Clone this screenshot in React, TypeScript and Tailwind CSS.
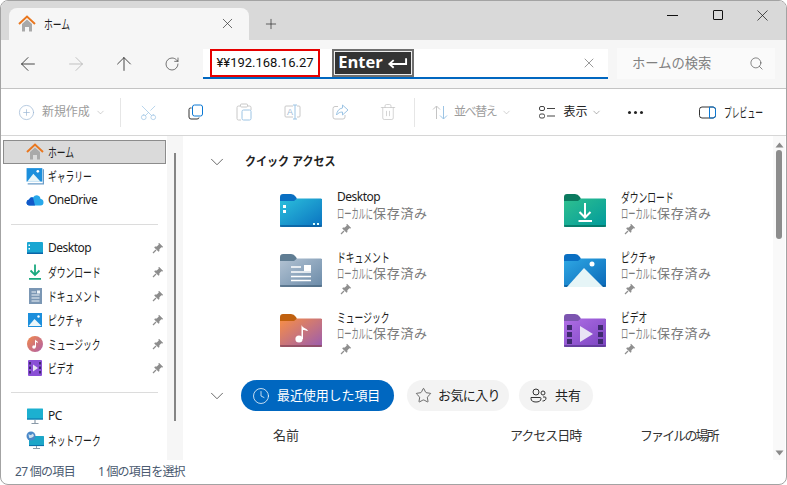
import React from "react";
import { ArrowLeft, ArrowRight, ArrowUp, RotateCw, X, Plus, Search, Scissors, Trash2, ChevronDown, Clock, Star, CirclePlus } from "lucide-react";

/* Narrow kana as in the reference font: real text, condensed horizontally. */
function K({ children, cw = 8.775, cls = "scale-x-[0.675] text-[13px]" }: { children: string; cw?: number; cls?: string }) {
  return (
    <span className={`block shrink-0 origin-left whitespace-nowrap leading-[16px] ${cls}`} style={{ width: children.length * cw }}>
      {children}
    </span>
  );
}

const Pin = ({ c = "#8d8d8d", s = 12 }: { c?: string; s?: number }) => (
  <svg width={s} height={s} viewBox="0 0 12 12" className="shrink-0">
    <path d="M7 0.8 L11.2 5 L10.3 5.6 L9.4 5.2 L7.4 7.2 L7.4 9 L6.6 9.8 L2.2 5.4 L3 4.6 L4.8 4.6 L6.8 2.6 L6.4 1.6 Z" fill={c} />
    <path d="M4 8 L1 11" stroke={c} strokeWidth="1.2" />
  </svg>
);

const HomeIcon = ({ s = 18 }: { s?: number }) => (
  <svg width={s} height={s} viewBox="0 0 18 18">
    <path d="M4 9 L9 4.5 L14 9 V16.5 H11 V12 H7 V16.5 H4 Z" fill="#a9a9a9" />
    <path d="M1 9 L9 1.6 L17 9" fill="none" stroke="#e9771f" strokeWidth="2" />
  </svg>
);

function Folder({ id, tab, from, to, edge, children }: { id: string; tab: string; from: string; to: string; edge: string; children?: React.ReactNode }) {
  return (
    <svg width="42" height="34" viewBox="0 0 42 34">
      <defs>
        <linearGradient id={id} x1="0" y1="0" x2="1" y2="1">
          <stop offset="0" stopColor={from} />
          <stop offset="1" stopColor={to} />
        </linearGradient>
      </defs>
      <path d="M0 3 Q0 0 3 0 H11 Q14 0 16 3 L17 5 H42 V10 H0 Z" fill={tab} />
      <path d="M0 7 H14 L17 4.5 H41 Q42 4.5 42 6 V31 Q42 33 40 33 H2 Q0 33 0 31 Z" fill={`url(#${id})`} />
      <path d="M0 32 H42" stroke={edge} strokeWidth="1.4" />
      {children}
    </svg>
  );
}

const DesktopFolder = () => (
  <Folder id="fd" tab="#0a6fc2" from="#2cc0dc" to="#0a72c0" edge="#0a5c9c">
    <rect x="3" y="11" width="3" height="3" fill="#fff" />
    <rect x="3" y="16" width="3" height="3" fill="#fff" />
    <rect x="33" y="29" width="2" height="2" fill="#dff" />
    <rect x="37" y="29" width="2" height="2" fill="#dff" />
  </Folder>
);
const DownloadFolder = () => (
  <Folder id="fdl" tab="#0b7a5f" from="#2fc08f" to="#019a9c" edge="#06705f">
    <path d="M21 9 V23 M15.5 18 L21 23.5 L26.5 18" fill="none" stroke="#fff" strokeWidth="2" />
    <path d="M14.5 27 H28" stroke="#fff" strokeWidth="2" />
  </Folder>
);
const DocFolder = () => (
  <Folder id="fdc" tab="#607d93" from="#b3c3d3" to="#6a8aa8" edge="#4e6a82">
    <path d="M11 13 H21 M11 18 H31 M11 22.5 H31 M11 26.5 H31" stroke="#fff" strokeWidth="1.6" />
    <rect x="24" y="11" width="7" height="6" fill="#fff" />
  </Folder>
);
const PicFolder = () => (
  <Folder id="fp" tab="#0a6fc2" from="#2fa8e4" to="#0a68b8" edge="#0a5c9c">
    <circle cx="28" cy="10" r="2.5" fill="#fff" />
    <path d="M3 33 L20 14 L39 33 Z" fill="#e6f5f7" />
  </Folder>
);
const MusicFolder = () => (
  <Folder id="fm" tab="#c0610f" from="#f98f45" to="#9a5cb0" edge="#8a4a5a">
    <circle cx="19" cy="25" r="3.6" fill="#fff" />
    <path d="M21.5 25 V11 C23 14.5 27 14 28 17 C26 16.5 24 16 23 16 V25 Z" fill="#fff" />
  </Folder>
);
const VideoFolder = () => (
  <Folder id="fv" tab="#7c55b0" from="#b06ee6" to="#7a44c0" edge="#5a3a90">
    <g fill="#3f2a70">
      <rect x="3" y="11" width="5" height="5" /><rect x="3" y="18" width="5" height="5" /><rect x="3" y="25" width="5" height="5" />
      <rect x="34" y="11" width="5" height="5" /><rect x="34" y="18" width="5" height="5" /><rect x="34" y="25" width="5" height="5" />
    </g>
    <path d="M16 12 L29 20 L16 28 Z" fill="#e9e3f5" />
  </Folder>
);

const SideIcons: Record<string, React.ReactNode> = {
  home: <HomeIcon />,
  gallery: (
    <svg width="18" height="18" viewBox="0 0 16 16">
      <rect x="0.5" y="1" width="14" height="12" fill="#1c8fdc" />
      <path d="M1 13 L6.5 6 L13 13 Z" fill="#e8f5f8" />
      <circle cx="10.5" cy="3.8" r="1.2" fill="#fff" />
      <path d="M1.5 15 H15.5 V2" fill="none" stroke="#6a9cc8" strokeWidth="1.2" />
    </svg>
  ),
  onedrive: (
    <svg width="18" height="14" viewBox="0 0 18 12">
      <path d="M3.5 11.5 Q0.5 11.5 0.5 8.5 Q0.5 6 3 5.6 Q4.5 2.5 7 3.5 Q9 0.5 12 1.5 Q14.4 2.3 14.6 5 Q17.5 5.3 17.5 8.2 Q17.5 11.5 14.5 11.5 Z" fill="#28a8ea" />
      <path d="M3.5 11.5 Q0.5 11.5 0.5 8.5 Q0.5 6 3 5.6 Q4.5 2.5 7 3.5 L9 11.5 Z" fill="#1258c8" />
    </svg>
  ),
  desktop: (
    <svg width="16" height="12" viewBox="0 0 16 12">
      <rect width="16" height="12" rx="1" fill="#19a6d2" />
      <rect y="10.5" width="16" height="1.5" fill="#0a64a8" />
      <rect x="1.5" y="2.5" width="1.5" height="1.5" fill="#fff" />
      <rect x="1.5" y="6" width="1.5" height="1.5" fill="#fff" />
    </svg>
  ),
  download: (
    <svg width="14" height="16" viewBox="0 0 14 16">
      <path d="M7 0.5 V10.5 M2.5 6.5 L7 11 L11.5 6.5" fill="none" stroke="#1aa97f" strokeWidth="1.8" />
      <path d="M1 14.8 H13" stroke="#1aa97f" strokeWidth="1.8" />
    </svg>
  ),
  doc: (
    <svg width="13" height="16" viewBox="0 0 13 16">
      <rect width="13" height="16" fill="#7b97b4" />
      <path d="M2.5 4 H7 M2.5 7 H10.5 M2.5 10 H10.5 M2.5 13 H10.5" stroke="#eef3f8" strokeWidth="1" />
      <rect x="8" y="2.5" width="3" height="3" fill="#eef3f8" />
    </svg>
  ),
  pic: (
    <svg width="14" height="14" viewBox="0 0 14 14">
      <rect width="14" height="14" fill="#1c8fdc" />
      <path d="M0.5 13 L6.5 6 L13.5 13 Z" fill="#eaf6f9" />
      <circle cx="10.5" cy="3.5" r="1.2" fill="#fff" />
    </svg>
  ),
  music: (
    <svg width="16" height="16" viewBox="0 0 16 16">
      <defs><linearGradient id="sm" x1="0" y1="0" x2="1" y2="1"><stop offset="0" stopColor="#f28a4a" /><stop offset="1" stopColor="#b05fa8" /></linearGradient></defs>
      <circle cx="8" cy="8" r="8" fill="url(#sm)" />
      <circle cx="7" cy="11" r="1.8" fill="#fff" />
      <path d="M8 11 V3.5 C9 5 11 5 11 7 L9 6 V11 Z" fill="#fff" />
    </svg>
  ),
  video: (
    <svg width="14" height="16" viewBox="0 0 14 16">
      <rect width="14" height="16" rx="1" fill="#8a4fd6" />
      <g fill="#3f2a70">
        <rect x="1" y="2" width="2" height="2.5" /><rect x="1" y="6.5" width="2" height="2.5" /><rect x="1" y="11" width="2" height="2.5" />
        <rect x="11" y="2" width="2" height="2.5" /><rect x="11" y="6.5" width="2" height="2.5" /><rect x="11" y="11" width="2" height="2.5" />
      </g>
      <path d="M5 4.5 L10 8 L5 11.5 Z" fill="#e9e3f5" />
    </svg>
  ),
  pc: (
    <svg width="16" height="16" viewBox="0 0 16 16">
      <rect y="0.5" width="16" height="11" rx="0.5" fill="#1cb0d0" />
      <path d="M0 11 H16" stroke="#0a6ca8" strokeWidth="1.2" />
      <path d="M8 12 V15 M4.5 15.5 H11.5" stroke="#8a9aa8" strokeWidth="1.2" />
    </svg>
  ),
  net: (
    <svg width="18" height="18" viewBox="0 0 18 18">
      <rect x="3" y="5" width="15" height="10" rx="0.5" fill="#1ca6c8" />
      <path d="M3 14.6 H18" stroke="#0a6ca8" strokeWidth="1" />
      <path d="M10.5 15 V17 M7 17.5 H14" stroke="#8a9aa8" strokeWidth="1" />
      <circle cx="5" cy="5" r="4.5" fill="#4a88c8" />
      <path d="M2.5 3 Q5 5 7 2.5 L8 5 Q5 8 3 6.5 Z" fill="#cfe0ec" />
    </svg>
  ),
};

function SideItem({ icon, label, pin, sel, latin }: { icon: string; label: string; pin?: boolean; sel?: boolean; latin?: boolean }) {
  return (
    <div className={`flex items-center h-[24px] ml-[2px] w-[163px] ${sel ? "bg-[#dadada] border border-[#8c8c8c]" : ""}`}>
      <span className={`flex justify-center items-center w-[20px] h-[20px] ${sel ? "ml-[21px]" : "ml-[22px]"} shrink-0`}>{SideIcons[icon]}</span>
      <span className="ml-[3px] flex text-[12px] leading-[16px] text-[#1c1c1c] flex-1 whitespace-nowrap">
        {latin ? <span className="tracking-[-0.5px]">{label}</span> : <K>{label}</K>}
      </span>
      {pin && <span className="mr-[2px] flex"><Pin /></span>}
    </div>
  );
}

function Quick({ icon, name, latin }: { icon: React.ReactNode; name: string; latin?: boolean }) {
  return (
    <div className="flex h-[60px]">
      <div className="w-[42px] mt-[5px] shrink-0">{icon}</div>
      <div className="ml-[15px] flex flex-col">
        <span className="flex h-[16px] leading-[16px] text-[12px] text-[#1c1c1c] whitespace-nowrap">
          {latin ? <span className="tracking-[-0.5px]">{name}</span> : <K>{name}</K>}
        </span>
        <span className="flex h-[16px] leading-[16px] text-[#7a7a7a] whitespace-nowrap">
          <K cw={7.2} cls="scale-x-[0.554] text-[13px]">ローカルに</K>
          <span className="text-[13px] tracking-[0.7px]">保存済み</span>
        </span>
        <span className="mt-[2px] ml-[3px] flex"><Pin c="#8f8f8f" /></span>
      </div>
    </div>
  );
}

const Btn = ({ children }: { children: React.ReactNode }) => (
  <div className="w-[48px] flex justify-center items-center shrink-0">{children}</div>
);

export default function App() {
  return (
    <div className="w-[787px] h-[485px] bg-white border border-[#a3a3a3] rounded-[8px] overflow-hidden flex flex-col font-['Noto_Sans','Noto_Sans_CJK_JP',sans-serif] text-[#1c1c1c]">
      {/* title bar */}
      <div className="h-[39px] bg-[#d9d9d9] flex items-end shrink-0">
        <div className="ml-[8px] w-[240px] h-[32px] bg-[#f6f6f6] rounded-t-[8px] flex items-center">
          <span className="ml-[9px] flex"><HomeIcon /></span>
          <span className="ml-[8px] text-[12px] flex-1 flex"><K>ホーム</K></span>
          <X size={17} strokeWidth={1} className="mr-[13px] -mt-[2px] text-[#333]" />
        </div>
        <div className="ml-[14px] h-[32px] flex items-center">
          <Plus size={16} strokeWidth={1} className="text-[#222]" />
        </div>
        <div className="flex-1" />
        <div className="flex self-start mt-[5px] mr-[1px] h-[18px] items-center">
          <div className="w-[45px] flex justify-center"><div className="w-[11px] h-px bg-[#111]" /></div>
          <div className="w-[45px] flex justify-center"><div className="w-[10px] h-[10px] border border-[#111] rounded-[1px]" /></div>
          <div className="w-[45px] flex justify-center"><X size={19} strokeWidth={0.9} className="text-[#111]" /></div>
        </div>
      </div>
      {/* address row */}
      <div className="h-[48px] bg-[#f6f6f6] flex items-center border-b-[1px] border-[#c4c4c4] shrink-0 box-content">
        <div className="w-[202px] flex shrink-0 pl-[3px]">
          <Btn><ArrowLeft size={22} strokeWidth={0.9} className="text-[#222]" /></Btn>
          <Btn><ArrowRight size={22} strokeWidth={0.9} className="text-[#b5b5b5]" /></Btn>
          <Btn><ArrowUp size={22} strokeWidth={0.9} className="text-[#222]" /></Btn>
          <Btn><RotateCw size={16} strokeWidth={1} className="text-[#333]" /></Btn>
        </div>
        <div className="w-[405px] h-[30px] bg-white border-b-2 border-[#0067c0] flex items-center pl-[7px] shrink-0">
          <div className="w-[110px] h-[28px] border-2 border-[#e60000] flex items-center justify-center text-[13px] text-[#111] font-['Roboto','Noto_Sans_CJK_JP',sans-serif] whitespace-nowrap -mt-[1px] bg-white">¥¥192.168.16.27</div>
          <div className="ml-[12px] w-[82px] h-[28px] bg-[#333] border-[2px] border-[#6f6f6f] -mt-[1px] flex items-center justify-center shrink-0 outline outline-1 -outline-offset-[3px] outline-[#eee]">
            <span className="text-white font-bold text-[16.5px] font-['Open_Sans',sans-serif]">Enter</span>
            <svg width="21" height="12" viewBox="0 0 22 12" className="ml-[4px]">
              <path d="M20 1 V7 H3 M7 3 L2.5 7 L7 11" fill="none" stroke="#fff" strokeWidth="2" />
            </svg>
          </div>
          <div className="flex-1" />
          <X size={16} strokeWidth={0.9} className="text-[#555] mr-[11px]" />
        </div>
        <div className="ml-[9px] w-[158px] h-[31px] bg-[#fafafa] flex items-center shrink-0 -mt-[1px]">
          <span className="ml-[15px] text-[13.3px] text-[#808080] flex-1">ホームの検索</span>
          <Search size={15} strokeWidth={1} className="mr-[11px] text-[#444]" />
        </div>
      </div>
      {/* toolbar */}
      <div className="h-[47px] border-b border-[#d6d6d6] flex items-center shrink-0 bg-white">
        <div className="w-[119px] pl-[17px] flex items-center shrink-0">
          <CirclePlus size={17} strokeWidth={1} className="text-[#9cb7d4]" />
          <span className="ml-[7px] text-[12px] text-[#9c9c9c] tracking-[-0.1px]">新規作成</span>
          <ChevronDown size={11} strokeWidth={1} className="ml-[5px] text-[#9c9c9c]" />
        </div>
        <div className="w-px h-[29px] bg-[#e6e6e6] shrink-0" />
        <div className="ml-[3px] flex">
          <Btn><Scissors size={19} strokeWidth={0.9} className="text-[#9cc4e4] -rotate-90" /></Btn>
          <Btn>
            <svg width="16" height="16" viewBox="0 0 16 16">
              <path d="M3.5 4 H2.5 Q1 4 1 5.5 V13 Q1 15 3 15 H9 Q11 15 11 13.5" fill="none" stroke="#333" strokeWidth="1" />
              <rect x="4.5" y="1" width="10" height="11" rx="2" fill="none" stroke="#0a78d4" strokeWidth="1" />
            </svg>
          </Btn>
          <Btn>
            <svg width="16" height="18" viewBox="0 0 16 18">
              <path d="M4 3 H2.5 Q1 3 1 4.5 V15.5 Q1 17 2.5 17 H5" fill="none" stroke="#c8c8c8" strokeWidth="1" />
              <path d="M12 3 H13.5 Q15 3 15 4.5 V7" fill="none" stroke="#c8c8c8" strokeWidth="1" />
              <rect x="4.5" y="1" width="7" height="3" rx="1" fill="none" stroke="#c8c8c8" strokeWidth="1" />
              <rect x="6" y="7" width="9" height="10" rx="1.5" fill="none" stroke="#9cc4e4" strokeWidth="1" />
            </svg>
          </Btn>
          <Btn>
            <svg width="17" height="16" viewBox="0 0 17 16">
              <path d="M9 2 H2 Q1 2 1 3 V12 Q1 13 2 13 H9 M13 2 H15 Q16 2 16 3 V12 Q16 13 15 13 H13" fill="none" stroke="#c8c8c8" strokeWidth="1" />
              <path d="M11 1 V15 M9 1 H13 M9 15 H13" stroke="#9cc4e4" strokeWidth="1" fill="none" />
              <text x="3" y="11" fontSize="9" fill="#9cb7d4" fontFamily="Liberation Sans">A</text>
            </svg>
          </Btn>
          <Btn>
            <svg width="17" height="16" viewBox="0 0 17 16">
              <path d="M6 2.5 H3 Q1 2.5 1 4.5 V13 Q1 15 3 15 H11 Q13 15 13 13 V11" fill="none" stroke="#c8c8c8" strokeWidth="1" />
              <path d="M10.5 1 L16 6 L10.5 11 V8 C8 8 6 9 4.5 11 C5 7 7 4.5 10.5 4 Z" fill="none" stroke="#9cc4e4" strokeWidth="1" />
            </svg>
          </Btn>
          <Btn><Trash2 size={18} strokeWidth={0.9} className="text-[#c0c0c0]" /></Btn>
        </div>
        <div className="ml-[2px] w-px h-[29px] bg-[#e6e6e6] shrink-0" />
        <div className="ml-[17px] flex items-center shrink-0">
          <svg width="16" height="15" viewBox="0 0 16 15">
            <path d="M4.5 14 V1 M1 4.5 L4.5 1 L8 4.5" fill="none" stroke="#c4c4c4" strokeWidth="1" />
            <path d="M11.5 1 V14 M8 10.5 L11.5 14 L15 10.5" fill="none" stroke="#9cc4e4" strokeWidth="1" />
          </svg>
          <span className="ml-[6px] text-[12px] text-[#9c9c9c] tracking-[-1.4px] whitespace-nowrap">並べ替え</span>
          <ChevronDown size={11} strokeWidth={1} className="ml-[5px] text-[#9c9c9c]" />
        </div>
        <div className="ml-[27px] flex items-center shrink-0">
          <svg width="16" height="13" viewBox="0 0 16 13">
            <rect x="0.5" y="0.5" width="5" height="4" rx="1.5" fill="none" stroke="#444" strokeWidth="1" />
            <rect x="0.5" y="8" width="5" height="4" rx="1.5" fill="none" stroke="#444" strokeWidth="1" />
            <path d="M8 2.5 H16 M8 10 H16" stroke="#444" strokeWidth="1" />
          </svg>
          <span className="ml-[8px] text-[12px] text-[#222]">表示</span>
          <ChevronDown size={11} strokeWidth={1} className="ml-[4px] text-[#555]" />
        </div>
        <div className="ml-[26px] flex gap-[3px] shrink-0">
          <span className="w-[3px] h-[3px] rounded-full bg-[#222]" />
          <span className="w-[3px] h-[3px] rounded-full bg-[#222]" />
          <span className="w-[3px] h-[3px] rounded-full bg-[#222]" />
        </div>
        <div className="ml-[56px] flex items-center shrink-0">
          <svg width="17" height="13" viewBox="0 0 17 13">
            <rect x="0.5" y="1" width="16" height="11" rx="2.5" fill="none" stroke="#333" strokeWidth="1" />
            <path d="M10.5 1 H14 Q16.5 1 16.5 3.5 V9.5 Q16.5 12 14 12 H10.5 Z" fill="none" stroke="#0a78d4" strokeWidth="1" />
          </svg>
          <span className="ml-[8px] text-[#222] flex"><K cw={7.8} cls="scale-x-[0.6] text-[13px]">プレビュー</K></span>
        </div>
      </div>
      {/* body */}
      <div className="flex-1 flex min-h-0">
        <div className="w-[182px] shrink-0 flex">
          <div className="w-[166px] pt-[4px] flex flex-col">
            <SideItem icon="home" label="ホーム" sel />
            <SideItem icon="gallery" label="ギャラリー" />
            <SideItem icon="onedrive" label="OneDrive" latin />
            <div className="ml-[10px] w-[147px] h-px bg-[#dcdcdc] my-[11.5px] shrink-0" />
            <SideItem icon="desktop" label="Desktop" pin latin />
            <SideItem icon="download" label="ダウンロード" pin />
            <SideItem icon="doc" label="ドキュメント" pin />
            <SideItem icon="pic" label="ピクチャ" pin />
            <SideItem icon="music" label="ミュージック" pin />
            <SideItem icon="video" label="ビデオ" pin />
            <div className="ml-[10px] w-[147px] h-px bg-[#dcdcdc] my-[11.5px] shrink-0" />
            <SideItem icon="pc" label="PC" latin />
            <SideItem icon="net" label="ネットワーク" />
          </div>
          <div className="w-[16px] bg-[#f6f6f6] flex justify-center">
            <div className="w-[2px] h-[268px] mt-[17px] bg-[#858585]" />
          </div>
        </div>
        <div className="flex-1 flex min-w-0">
          <div className="flex-1 min-w-0 overflow-hidden">
            <div className="h-[52px] flex items-center pl-[23px]">
              <ChevronDown size={22} strokeWidth={0.8} className="text-[#333]" />
              <span className="ml-[17px] font-bold text-[#222] flex"><K cw={11} cls="scale-x-[0.92] text-[12px]">クイック アクセス</K></span>
            </div>
            <div className="grid grid-cols-[284px_1fr] auto-rows-[60px] pl-[97px] mt-[1px] mb-[11px]">
              <Quick icon={<DesktopFolder />} name="Desktop" latin />
              <Quick icon={<DownloadFolder />} name="ダウンロード" />
              <Quick icon={<DocFolder />} name="ドキュメント" />
              <Quick icon={<PicFolder />} name="ピクチャ" />
              <Quick icon={<MusicFolder />} name="ミュージック" />
              <Quick icon={<VideoFolder />} name="ビデオ" />
            </div>
            <div className="h-[31px] flex items-center pl-[23px]">
              <ChevronDown size={22} strokeWidth={0.8} className="text-[#333]" />
              <div className="ml-[13px] w-[153px] h-[31px] rounded-full bg-[#0067c0] text-white flex items-center pl-[11px] shrink-0">
                <Clock size={18} strokeWidth={1} />
                <span className="ml-[7px] text-[13px] whitespace-nowrap tracking-[-0.1px]">最近使用した項目</span>
              </div>
              <div className="ml-[13px] w-[102px] h-[31px] rounded-full bg-[#f3f3f3] flex items-center pl-[8px] shrink-0">
                <Star size={17} strokeWidth={1} className="text-[#333]" />
                <span className="ml-[6px] text-[13px] text-[#222] tracking-[-0.6px] whitespace-nowrap">お気に入り</span>
              </div>
              <div className="ml-[10px] w-[74px] h-[31px] rounded-full bg-[#f3f3f3] flex items-center pl-[11px] shrink-0">
                <svg width="17" height="15" viewBox="0 0 17 15">
                  <circle cx="6" cy="4" r="3" fill="none" stroke="#333" strokeWidth="1" />
                  <circle cx="13" cy="5" r="2" fill="none" stroke="#333" strokeWidth="1" />
                  <path d="M1 9.5 H10 Q11 9.5 11 10.5 C11 13 9 14 6 14 C3 14 1 13 1 10.5 Z" fill="none" stroke="#333" strokeWidth="1" />
                  <path d="M13 9 H15 Q16 9 16 10 C16 12 14.5 13 12.5 13" fill="none" stroke="#333" strokeWidth="1" />
                </svg>
                <span className="ml-[8px] text-[13px] text-[#222] whitespace-nowrap">共有</span>
              </div>
            </div>
            <div className="h-[50px] flex items-center pl-[90px] text-[13px] text-[#333]">
              <span className="w-[237px]">名前</span>
              <span className="w-[130px] whitespace-nowrap tracking-[-1px]">アクセス日時</span>
              <span className="whitespace-nowrap tracking-[-1.9px]">ファイルの場所</span>
            </div>
          </div>
          <div className="w-[12px] bg-[#f9f9f9] mr-[1px] flex flex-col items-center shrink-0 relative">
            <svg width="9" height="6" viewBox="0 0 9 6" className="mt-[6px]"><path d="M0.5 5.5 L4.5 0.5 L8.5 5.5 Z" fill="#8a8a8a" /></svg>
            <div className="w-[6px] h-[89px] mt-[2px] rounded-full bg-[#8c8c8c]" />
            <div className="flex-1" />
            <svg width="9" height="6" viewBox="0 0 9 6" className="mb-[4px]"><path d="M0.5 0.5 L4.5 5.5 L8.5 0.5 Z" fill="#8a8a8a" /></svg>
          </div>
        </div>
      </div>
      {/* status */}
      <div className="h-[24px] flex items-center shrink-0 pl-[14px] text-[12px] text-[#4a5a70] whitespace-nowrap">
        <span className="w-[83px] tracking-[-0.7px]">27 個の項目</span>
        <span className="tracking-[-0.8px]">1 個の項目を選択</span>
      </div>
    </div>
  );
}
